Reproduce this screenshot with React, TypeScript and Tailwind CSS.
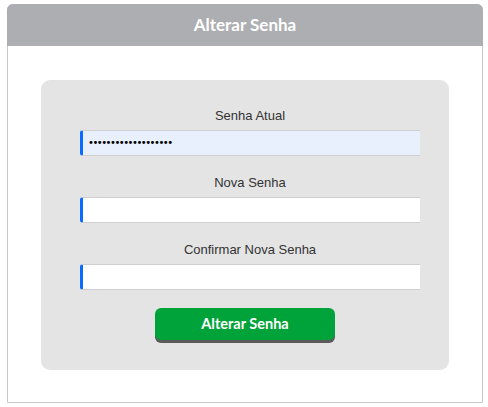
export default function App() {
  const fields = [
    { label: "Senha Atual", value: "•••••••••••••••••••", filled: true },
    { label: "Nova Senha", value: "", filled: false },
    { label: "Confirmar Nova Senha", value: "", filled: false },
  ];

  return (
    <div className="min-h-screen bg-white pt-[4px] pl-[7px]">
      <div className="w-[476px] h-[399px] border border-[#c8c8c8] rounded-t-[6px] flex flex-col">
        <div className="h-[42px] -mx-px -mt-px bg-[#adaeb2] rounded-t-[6px] flex items-center justify-center">
          <h1 className="text-white text-[17px] font-bold font-['Lato',sans-serif]">Alterar Senha</h1>
        </div>

        <div className="px-[33px] pt-[34px]">
          <form className="bg-[#e4e4e4] rounded-[9px] h-[290px] pt-[26px]">
            <div className="ml-[39px] w-[340px] flex flex-col">
              {fields.map((f, i) => (
                <div key={f.label} className={i === 0 ? "flex flex-col" : "flex flex-col mt-[17px]"}>
                  <label className="text-center text-[13px] leading-[20px] text-[#333] font-['Liberation_Sans',Arial,sans-serif] mb-[4px]">
                    {f.label}
                  </label>
                  <div
                    className={
                      f.filled
                        ? "h-[26px] bg-[#e8f0fe] border-y border-[#cfcfcf] border-l-[3px] border-l-[#0a6cff] rounded-l-[3px] flex items-center pl-[5px]"
                        : "h-[26px] bg-white border-y border-[#cfcfcf] border-l-[3px] border-l-[#0a6cff] rounded-l-[3px] flex items-center pl-[5px]"
                    }
                  >
                    {f.value && (
                      <span className="text-black text-[10px] tracking-[-1.5px] font-['DejaVu_Sans',sans-serif] leading-none">
                        {f.value}
                      </span>
                    )}
                  </div>
                </div>
              ))}
            </div>
            <div className="flex justify-center mt-[18px]">
              <button
                type="button"
                className="w-[180px] h-[32px] bg-[#00a33a] rounded-[6px] shadow-[0_3px_0_#5a5a5a] text-white text-[14.5px] font-bold font-['Lato',sans-serif]"
              >
                Alterar Senha
              </button>
            </div>
          </form>
        </div>
      </div>
    </div>
  );
}
